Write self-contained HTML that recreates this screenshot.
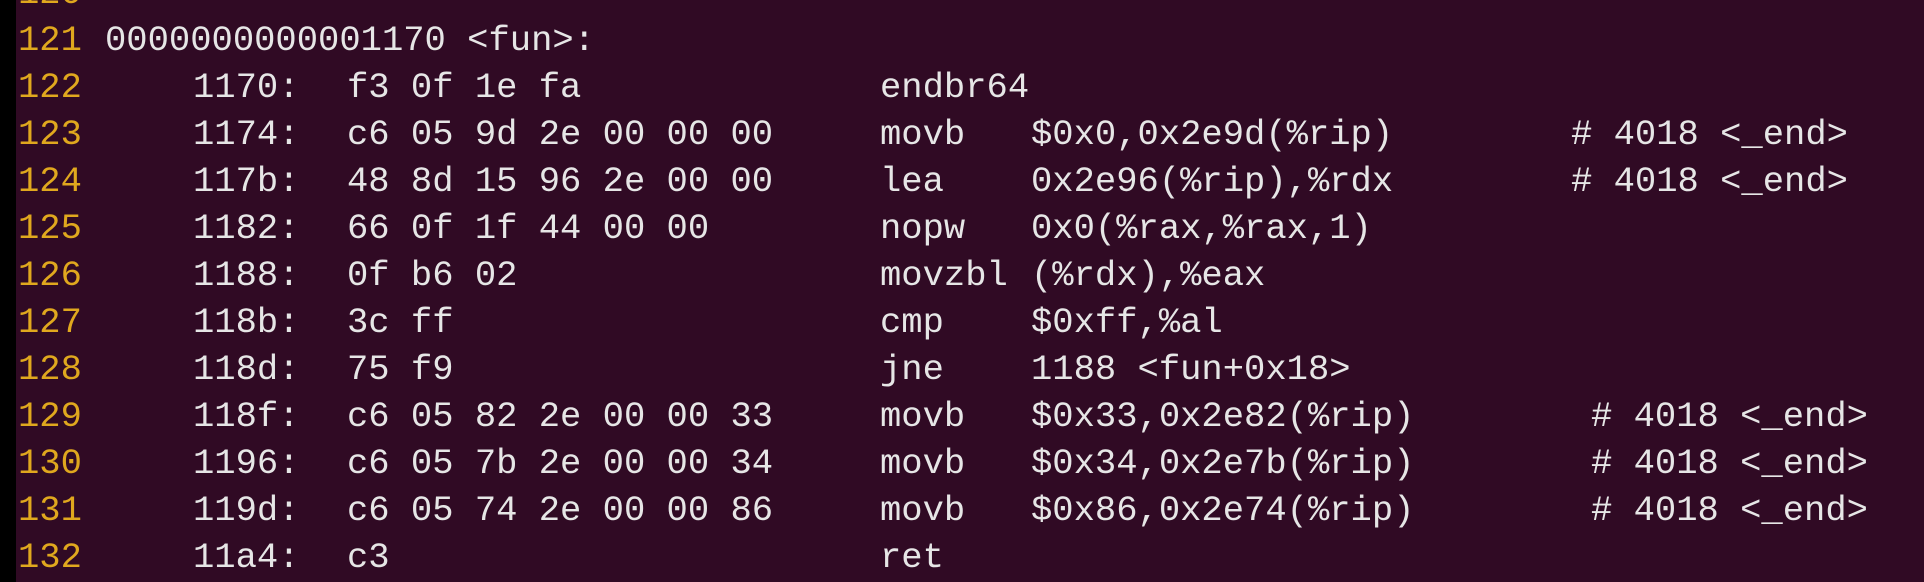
<!DOCTYPE html>
<html><head><meta charset="utf-8"><style>
html,body{margin:0;padding:0;width:1924px;height:582px;overflow:hidden;background:#300a24;}
.strip{position:absolute;left:0;top:0;width:16px;height:582px;background:#000;}
.r{position:absolute;left:0;height:47px;width:1924px;font-family:"Liberation Mono",monospace;font-size:35.5px;line-height:47px;color:#e6e6e6;white-space:pre;}
.r span{position:absolute;top:0;}
.n{left:18px;color:#e0a81e;}
.a{left:193px}.b{left:347px}.m{left:880px}.o{left:1031px}.c1{left:1571px}.c2{left:1591px}
</style></head><body>
<div class="strip"></div>
<div class="r" style="top:-30px"><span class="n">120</span></div>
<div class="r" style="top:17px"><span class="n">121</span><span style="left:105px">0000000000001170 &lt;fun&gt;:</span></div>
<div class="r" style="top:64px"><span class="n">122</span><span class="a">1170:</span><span class="b">f3 0f 1e fa</span><span class="m">endbr64</span></div>
<div class="r" style="top:111px"><span class="n">123</span><span class="a">1174:</span><span class="b">c6 05 9d 2e 00 00 00</span><span class="m">movb</span><span class="o">$0x0,0x2e9d(%rip)</span><span class="c1"># 4018 &lt;_end&gt;</span></div>
<div class="r" style="top:158px"><span class="n">124</span><span class="a">117b:</span><span class="b">48 8d 15 96 2e 00 00</span><span class="m">lea</span><span class="o">0x2e96(%rip),%rdx</span><span class="c1"># 4018 &lt;_end&gt;</span></div>
<div class="r" style="top:205px"><span class="n">125</span><span class="a">1182:</span><span class="b">66 0f 1f 44 00 00</span><span class="m">nopw</span><span class="o">0x0(%rax,%rax,1)</span></div>
<div class="r" style="top:252px"><span class="n">126</span><span class="a">1188:</span><span class="b">0f b6 02</span><span class="m">movzbl</span><span class="o">(%rdx),%eax</span></div>
<div class="r" style="top:299px"><span class="n">127</span><span class="a">118b:</span><span class="b">3c ff</span><span class="m">cmp</span><span class="o">$0xff,%al</span></div>
<div class="r" style="top:346px"><span class="n">128</span><span class="a">118d:</span><span class="b">75 f9</span><span class="m">jne</span><span class="o">1188 &lt;fun+0x18&gt;</span></div>
<div class="r" style="top:393px"><span class="n">129</span><span class="a">118f:</span><span class="b">c6 05 82 2e 00 00 33</span><span class="m">movb</span><span class="o">$0x33,0x2e82(%rip)</span><span class="c2"># 4018 &lt;_end&gt;</span></div>
<div class="r" style="top:440px"><span class="n">130</span><span class="a">1196:</span><span class="b">c6 05 7b 2e 00 00 34</span><span class="m">movb</span><span class="o">$0x34,0x2e7b(%rip)</span><span class="c2"># 4018 &lt;_end&gt;</span></div>
<div class="r" style="top:487px"><span class="n">131</span><span class="a">119d:</span><span class="b">c6 05 74 2e 00 00 86</span><span class="m">movb</span><span class="o">$0x86,0x2e74(%rip)</span><span class="c2"># 4018 &lt;_end&gt;</span></div>
<div class="r" style="top:534px"><span class="n">132</span><span class="a">11a4:</span><span class="b">c3</span><span class="m">ret</span></div>
</body></html>
